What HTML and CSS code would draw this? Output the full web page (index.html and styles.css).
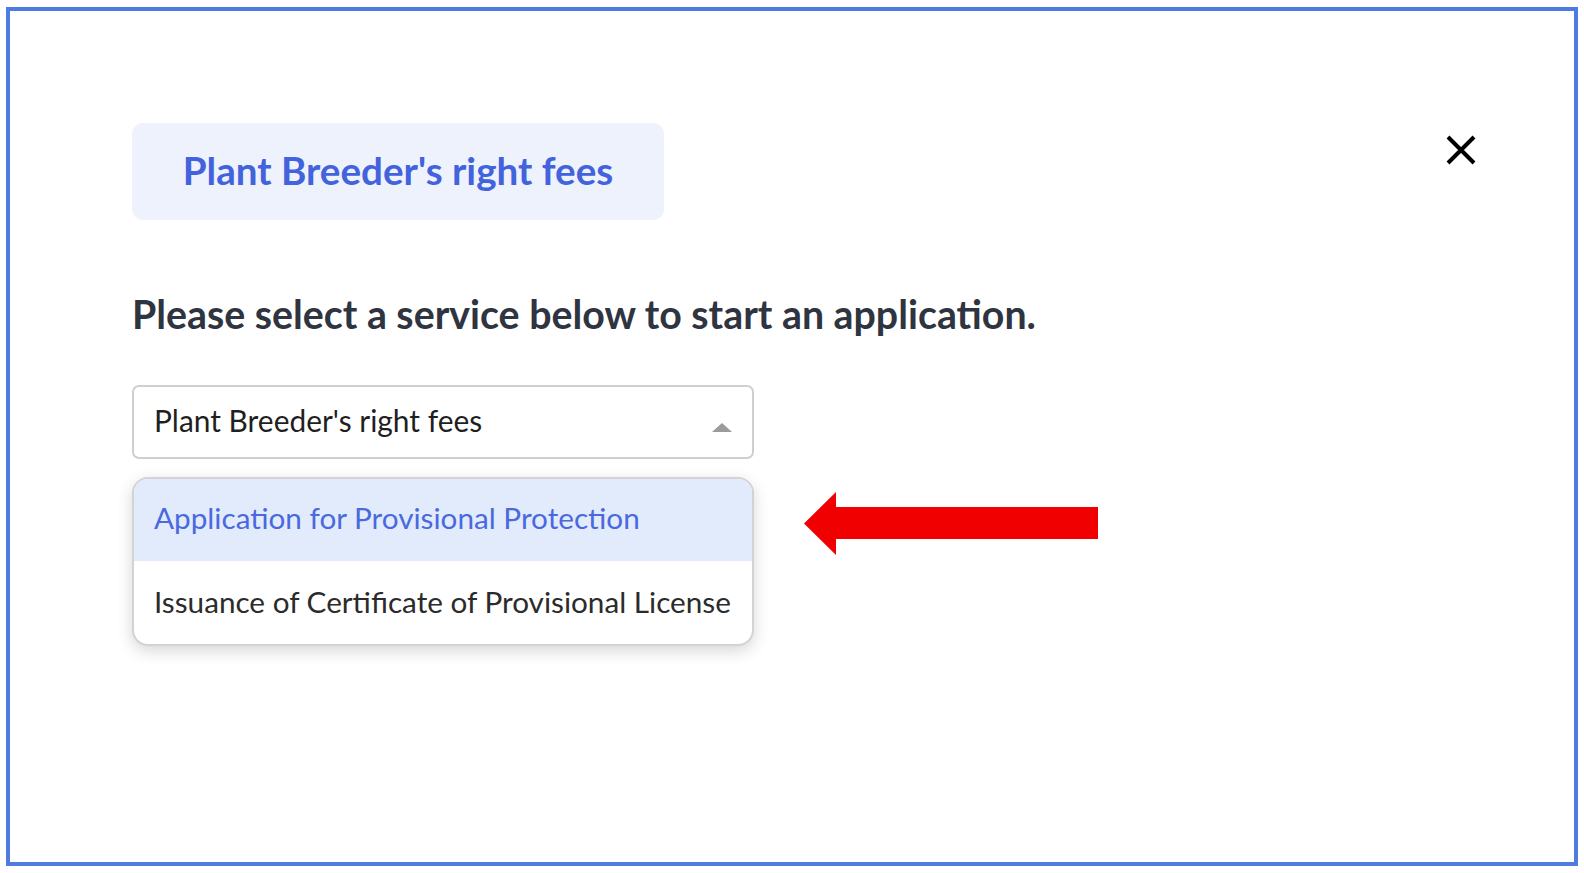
FILE: index.html
```html
<!DOCTYPE html>
<html>
<head>
<meta charset="utf-8">
<link rel="stylesheet" href="styles.css">
</head>
<body>
<div class="frame">
  <div class="header">
    <div class="badge">Plant Breeder's right fees</div>
    <button class="close" aria-label="Close">
      <svg width="32" height="32" viewBox="0 0 32 32"><path d="M3 3 L29 29 M29 3 L3 29" stroke="#000" stroke-width="4" stroke-linecap="butt" fill="none"/></svg>
    </button>
  </div>
  <h2 class="heading">Please select a service below to start an application.</h2>
  <div class="select">
    <span class="select-value">Plant Breeder's right fees</span>
    <span class="caret"></span>
  </div>
  <div class="menu-row">
    <ul class="menu">
      <li class="option option-active">Application for Provisional Protection</li>
      <li class="option option-second">Issuance of Certificate of Provisional License</li>
    </ul>
    <svg class="pointer" width="294" height="63" viewBox="0 0 294 63"><polygon points="0,31.5 32,0 32,15 294,15 294,47 32,47 32,63" fill="#f00000"/></svg>
  </div>
</div>
</body>
</html>
```
FILE: styles.css
```css
* { box-sizing: border-box; }
body { margin: 0; background: #fff; font-family: "Lato", "Open Sans", sans-serif; }
.frame {
  margin: 7px 0 0 6px;
  width: 1572px;
  height: 859px;
  border: 4px solid #4f7ae0;
  padding: 112px 0 0 122px;
  background: #fff;
}
.header {
  width: 1345px;
  display: flex;
  justify-content: space-between;
  align-items: flex-start;
}
.badge {
  width: 532px;
  height: 97px;
  padding-top: 24px;
  background: #eef2fc;
  border-radius: 11px;
  color: #4263db;
  font-size: 38.6px;
  font-weight: 700;
  line-height: 46px;
  text-align: center;
}
.close {
  margin-top: 11px;
  padding: 0;
  border: 0;
  background: none;
  width: 32px;
  height: 32px;
  display: block;
}
.close svg { display: block; }
.heading {
  margin: 70px 0 0;
  font-size: 39.3px;
  font-weight: 700;
  line-height: 47px;
  color: #2f3441;
}
.select {
  margin-top: 48px;
  width: 622px;
  height: 74px;
  border: 2px solid #cfcfcf;
  border-radius: 7px;
  padding: 0 20px 4px 20px;
  display: flex;
  align-items: center;
  justify-content: space-between;
}
.select-value {
  font-size: 29.9px;
  line-height: 36px;
  color: #1f1f1f;
}
.caret {
  margin-top: 14px;
  width: 0;
  height: 0;
  border-left: 10px solid transparent;
  border-right: 10px solid transparent;
  border-bottom: 9px solid #9b9b9b;
}
.menu-row {
  margin-top: 18px;
  display: flex;
  align-items: flex-start;
  gap: 50px;
}
.menu {
  list-style: none;
  margin: 0;
  padding: 0;
  width: 622px;
  border: 2px solid #d3d3d3;
  border-radius: 16px;
  overflow: hidden;
  background: #fff;
  box-shadow: 0 5px 16px rgba(0, 0, 0, 0.16);
}
.option {
  padding: 21px 20px 25px;
  font-size: 29.7px;
  line-height: 36px;
  color: #2b2b2b;
  white-space: nowrap;
}
.option-active {
  background: #e2ebfb;
  color: #4a69df;
}
.option-second {
  padding: 23px 20px 24px;
}
.pointer {
  margin-top: 15px;
  display: block;
}
```
